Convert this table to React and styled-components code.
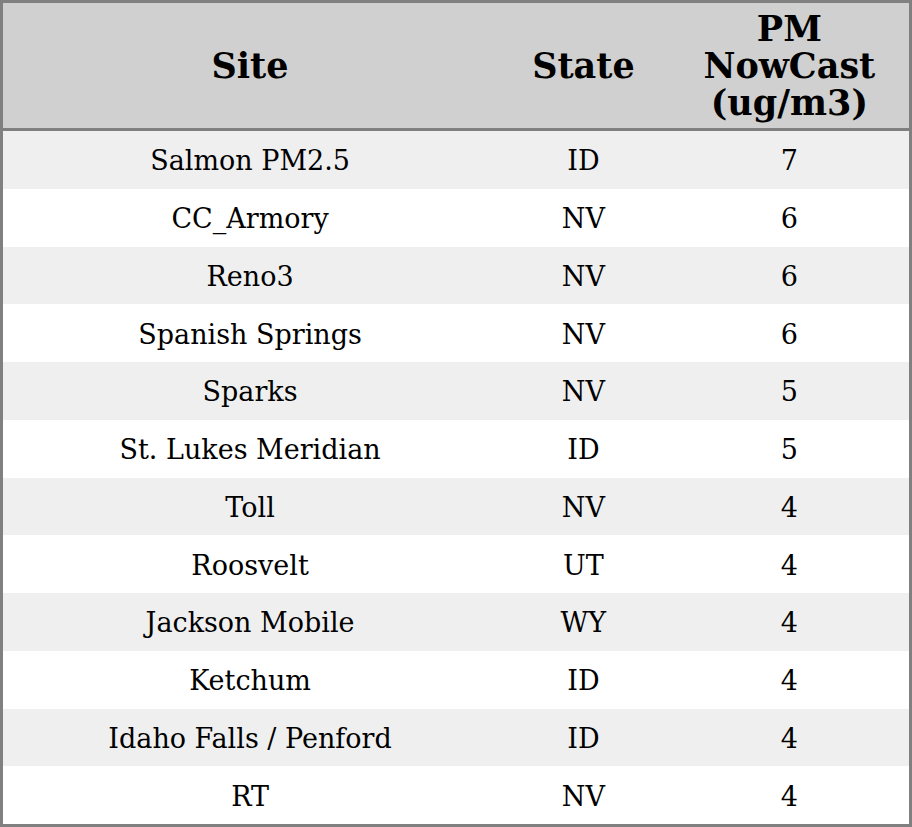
import React from 'react'
import styled, { createGlobalStyle } from 'styled-components'

const Global = createGlobalStyle`
  html, body {
    margin: 0;
    padding: 0;
    background: #ffffff;
  }
`

const Table = styled.table`
  width: 912px;
  border-collapse: collapse;
  border: 3px solid #808080;
  font-family: "DejaVu Serif", serif;
  color: #000;
  table-layout: fixed;
`

const HeadCell = styled.th`
  background: #d0d0d0;
  height: 125px;
  padding: 0 4px;
  font-size: 35px;
  font-weight: bold;
  line-height: 37px;
  text-align: center;
  vertical-align: middle;
  border-bottom: 3px solid #808080;
`

const Row = styled.tr`
  background: ${({ $odd }) => ($odd ? '#efefef' : '#ffffff')};
`

// row pitch is 57.75px; the 3px top padding nudges text down like the reference
const Cell = styled.td`
  height: 54.75px;
  padding: 3px 4px 0;
  font-size: 27px;
  line-height: 32px;
  text-align: center;
  vertical-align: middle;
`

const rows = [
  ['Salmon PM2.5', 'ID', 7],
  ['CC_Armory', 'NV', 6],
  ['Reno3', 'NV', 6],
  ['Spanish Springs', 'NV', 6],
  ['Sparks', 'NV', 5],
  ['St. Lukes Meridian', 'ID', 5],
  ['Toll', 'NV', 4],
  ['Roosvelt', 'UT', 4],
  ['Jackson Mobile', 'WY', 4],
  ['Ketchum', 'ID', 4],
  ['Idaho Falls / Penford', 'ID', 4],
  ['RT', 'NV', 4],
]

export default function App() {
  return (
    <>
      <Global />
      <Table>
        <colgroup>
          <col style={{ width: 494 }} />
          <col style={{ width: 172 }} />
          <col style={{ width: 240 }} />
        </colgroup>
        <thead>
          <tr>
            <HeadCell>Site</HeadCell>
            <HeadCell>State</HeadCell>
            <HeadCell>PM<br />NowCast<br />(ug/m3)</HeadCell>
          </tr>
        </thead>
        <tbody>
          {rows.map(([site, state, pm], i) => (
            <Row key={site} $odd={i % 2 === 0}>
              <Cell>{site}</Cell>
              <Cell>{state}</Cell>
              <Cell>{pm}</Cell>
            </Row>
          ))}
        </tbody>
      </Table>
    </>
  )
}
